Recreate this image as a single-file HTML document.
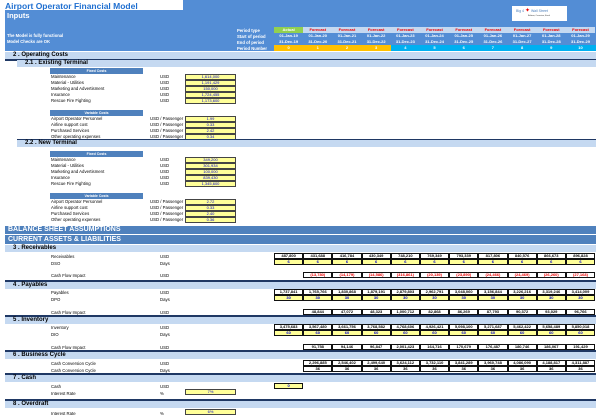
<!DOCTYPE html>
<html><head><meta charset="utf-8"><style>
*{margin:0;padding:0;box-sizing:border-box}
body{width:600px;height:420px;background:#fff;position:relative;overflow:hidden;font-family:"Liberation Sans",sans-serif;font-size:4.3px;color:#000}
.a{position:absolute;white-space:nowrap}
.bar{position:absolute;left:5px;width:591px;background:#c5d9f1;font-weight:bold;font-size:6px;line-height:7px;padding-left:8px}
.dk{position:absolute;left:5px;width:591px;height:1.5px;background:#1f3864}
.big{position:absolute;left:5px;width:591px;background:#4f81bd;color:#fff;font-weight:bold;font-size:7px;line-height:8px;padding-left:3px}
.hd{position:absolute;left:50px;width:93px;height:6px;background:#4f81bd;color:#fff;font-weight:bold;font-size:3.5px;line-height:6px;text-align:center}
.yb{position:absolute;left:185px;width:51px;height:6px;background:#ffff99;border:1px solid #444;font-size:4px;line-height:4px;text-align:center;color:#0000cc}
.row{position:absolute;left:274px;display:flex;height:6px}
.row div{width:29.2px;height:6px;border:1px solid #111;font-size:4px;line-height:4px;text-align:center;font-weight:bold}
.row div.e{border:none;background:none}
.y div{background:#ffff99;color:#0000cc}
.r div{color:#e00}
.hr{position:absolute;left:274px;display:flex;height:6px}
.hr div{width:29.2px;text-align:center;font-size:4px;line-height:6px;font-weight:bold}
</style></head><body>
<div class="a" style="left:183px;top:0;width:413px;height:11px;background:#538dd5"></div>
<div class="a" style="left:5px;top:1px;color:#1f6fd0;font-weight:bold;font-size:8.5px">Airport Operator Financial Model</div>
<div class="a" style="left:5px;top:10px;width:591px;height:41px;background:#538dd5"></div>
<div class="a" style="left:7px;top:11px;color:#fff;font-weight:bold;font-size:7.5px">Inputs</div>
<div class="a" style="left:7px;top:33px;color:#fff;font-weight:bold;font-size:4.2px">The Model is fully functional</div>
<div class="a" style="left:7px;top:39px;color:#fff;font-weight:bold;font-size:4.2px">Model Checks are OK</div>
<div class="a" style="left:237px;top:28px;color:#fff;font-weight:bold;font-size:4.2px;line-height:6px">Period type<br>Start of period<br>End of period<br>Period Number</div>
<div class="a" style="left:512px;top:6px;width:55px;height:15px;background:#fff;font-size:3.5px;color:#4f81bd;padding:3px 0 0 4px;line-height:4px">Big 4 <span style="color:#e00;font-size:6px">&#10022;</span> Wall Street<br><span style="color:#333;font-size:2px;padding-left:12px">Believe, Conceive, Excel</span></div>
<div class="hr" style="top:27px;background:#c5d9f1;color:#e00;width:321px"><div style="background:#92d050;color:#fff">Actual</div><div>Forecast</div><div>Forecast</div><div>Forecast</div><div>Forecast</div><div>Forecast</div><div>Forecast</div><div>Forecast</div><div>Forecast</div><div>Forecast</div><div>Forecast</div></div>
<div class="hr" style="top:33px;color:#fff"><div>01-Jan-19</div><div>01-Jan-20</div><div>01-Jan-21</div><div>01-Jan-22</div><div>01-Jan-23</div><div>01-Jan-24</div><div>01-Jan-25</div><div>01-Jan-26</div><div>01-Jan-27</div><div>01-Jan-28</div><div>01-Jan-29</div></div>
<div class="hr" style="top:39px;color:#fff"><div>31-Dec-19</div><div>31-Dec-20</div><div>31-Dec-21</div><div>31-Dec-22</div><div>31-Dec-23</div><div>31-Dec-24</div><div>31-Dec-25</div><div>31-Dec-26</div><div>31-Dec-27</div><div>31-Dec-28</div><div>31-Dec-29</div></div>
<div class="hr" style="top:45px;color:#fff;background:#00b0f0;width:322px"><div style="background:#ffc000">0</div><div style="background:#ffc000">1</div><div style="background:#ffc000">2</div><div style="background:#ffc000">3</div><div>4</div><div>5</div><div>6</div><div>7</div><div>8</div><div>9</div><div>10</div></div>

<div class="bar" style="top:52px;height:7px">2 . Operating Costs</div>
<div class="dk" style="top:59px"></div>
<div class="bar" style="top:60px;left:17px;width:579px;height:7px">2.1 . Existing Terminal</div>
<div class="hd" style="top:68px">Fixed Costs</div>
<div class="a" style="left:51px;top:74px;line-height:6px">Maintenance<br>Material - Utilities<br>Marketing and Advertisment<br>Insurance<br>Rescue Fire Fighting</div>
<div class="a" style="left:160px;top:74px;line-height:6px">USD<br>USD<br>USD<br>USD<br>USD</div>
<div class="yb" style="top:74px">1,614,000</div><div class="yb" style="top:80px">1,191,429</div><div class="yb" style="top:86px">150,000</div><div class="yb" style="top:92px">1,724,455</div><div class="yb" style="top:98px">1,173,600</div>
<div class="hd" style="top:110px">Variable Costs</div>
<div class="a" style="left:51px;top:116px;line-height:6px">Airport Operator Personnel<br>Airline support cost<br>Purchased Services<br>Other operating expenses</div>
<div class="a" style="left:150px;top:116px;line-height:6px">USD / Passenger<br>USD / Passenger<br>USD / Passenger<br>USD / Passenger</div>
<div class="yb" style="top:116px">1.99</div><div class="yb" style="top:122px">0.33</div><div class="yb" style="top:128px">2.42</div><div class="yb" style="top:134px">0.34</div>

<div class="dk" style="top:139px;left:17px;width:579px"></div>
<div class="bar" style="top:140px;left:17px;width:579px;height:7px">2.2 . New Terminal</div>
<div class="hd" style="top:151px">Fixed Costs</div>
<div class="a" style="left:51px;top:157px;line-height:6px">Maintenance<br>Material - Utilities<br>Marketing and Advertisment<br>Insurance<br>Rescue Fire Fighting</div>
<div class="a" style="left:160px;top:157px;line-height:6px">USD<br>USD<br>USD<br>USD<br>USD</div>
<div class="yb" style="top:157px">349,200</div><div class="yb" style="top:163px">301,934</div><div class="yb" style="top:169px">100,000</div><div class="yb" style="top:175px">839,430</div><div class="yb" style="top:181px">1,345,600</div>
<div class="hd" style="top:193px">Variable Costs</div>
<div class="a" style="left:51px;top:199px;line-height:6px">Airport Operator Personnel<br>Airline support cost<br>Purchased Services<br>Other operating expenses</div>
<div class="a" style="left:150px;top:199px;line-height:6px">USD / Passenger<br>USD / Passenger<br>USD / Passenger<br>USD / Passenger</div>
<div class="yb" style="top:199px">2.72</div><div class="yb" style="top:205px">0.33</div><div class="yb" style="top:211px">2.40</div><div class="yb" style="top:217px">0.36</div>

<div class="big" style="top:226px;height:8px">BALANCE SHEET ASSUMPTIONS</div>
<div class="big" style="top:235px;height:9px;line-height:9px">CURRENT ASSETS &amp; LIABILITIES</div>
<div class="bar" style="top:245px;height:7px">3 . Receivables</div>
<div class="a" style="left:51px;top:254px;line-height:6.5px">Receivables<br>DSO</div>
<div class="a" style="left:160px;top:254px;line-height:6.5px">USD<br>Days</div>
<div class="row" style="top:253px"><div>487,800</div><div>431,688</div><div>416,784</div><div>430,349</div><div>748,210</div><div>769,349</div><div>793,339</div><div>817,806</div><div>840,576</div><div>866,673</div><div>896,828</div></div>
<div class="row y" style="top:259px"><div>6</div><div>6</div><div>6</div><div>6</div><div>6</div><div>6</div><div>6</div><div>6</div><div>6</div><div>6</div><div>6</div></div>
<div class="a" style="left:51px;top:273px">Cash Flow Impact</div><div class="a" style="left:160px;top:273px">USD</div>
<div class="row r" style="top:272px"><div class="e"></div><div>(13,780)</div><div>(14,179)</div><div>(14,586)</div><div>(316,861)</div><div>(20,139)</div><div>(23,890)</div><div>(24,466)</div><div>(24,469)</div><div>(26,260)</div><div>(27,168)</div></div>

<div class="dk" style="top:280px"></div>
<div class="bar" style="top:281.5px;height:7px">4 . Payables</div>
<div class="a" style="left:51px;top:290px;line-height:6.5px">Payables<br>DPO</div>
<div class="a" style="left:160px;top:290px;line-height:6.5px">USD<br>Days</div>
<div class="row" style="top:289px"><div>1,737,841</div><div>1,765,766</div><div>1,830,868</div><div>1,879,191</div><div>2,879,803</div><div>2,962,791</div><div>3,048,060</div><div>3,156,844</div><div>3,226,216</div><div>3,319,246</div><div>3,414,009</div></div>
<div class="row y" style="top:295px"><div>30</div><div>30</div><div>30</div><div>30</div><div>30</div><div>30</div><div>30</div><div>30</div><div>30</div><div>30</div><div>30</div></div>
<div class="a" style="left:51px;top:310px">Cash Flow Impact</div><div class="a" style="left:160px;top:310px">USD</div>
<div class="row" style="top:309px"><div class="e"></div><div>48,844</div><div>47,072</div><div>48,323</div><div>1,000,712</div><div>82,868</div><div>86,269</div><div>87,793</div><div>90,372</div><div>93,029</div><div>96,766</div></div>

<div class="dk" style="top:315px"></div>
<div class="bar" style="top:316.5px;height:7px">5 . Inventory</div>
<div class="a" style="left:51px;top:325px;line-height:6.5px">Inventory<br>DIO</div>
<div class="a" style="left:160px;top:325px;line-height:6.5px">USD<br>Days</div>
<div class="row" style="top:324px"><div>3,475,683</div><div>3,567,480</div><div>3,661,756</div><div>3,768,582</div><div>4,768,606</div><div>4,926,421</div><div>5,098,100</div><div>5,271,687</div><div>5,462,422</div><div>5,658,489</div><div>5,850,018</div></div>
<div class="row y" style="top:330px"><div>60</div><div>60</div><div>60</div><div>60</div><div>60</div><div>60</div><div>60</div><div>60</div><div>60</div><div>60</div><div>60</div></div>
<div class="a" style="left:51px;top:345px">Cash Flow Impact</div><div class="a" style="left:160px;top:345px">USD</div>
<div class="row" style="top:344px"><div class="e"></div><div>91,758</div><div>94,146</div><div>96,847</div><div>2,001,423</div><div>164,716</div><div>170,679</div><div>176,487</div><div>180,746</div><div>186,067</div><div>191,429</div></div>

<div class="dk" style="top:350px"></div>
<div class="bar" style="top:351.5px;height:7px">6 . Business Cycle</div>
<div class="a" style="left:51px;top:361px;line-height:6.5px">Cash Conversion Cycle<br>Cash Conversion Cycle</div>
<div class="a" style="left:160px;top:361px;line-height:6.5px">USD<br>Days</div>
<div class="row" style="top:360px"><div class="e"></div><div>2,296,885</div><div>2,546,402</div><div>2,499,640</div><div>3,624,112</div><div>3,732,110</div><div>3,841,289</div><div>3,960,748</div><div>4,086,090</div><div>4,188,817</div><div>4,311,887</div></div>
<div class="row" style="top:366px"><div class="e"></div><div>36</div><div>36</div><div>36</div><div>36</div><div>36</div><div>36</div><div>36</div><div>36</div><div>36</div><div>36</div></div>

<div class="dk" style="top:373px"></div>
<div class="bar" style="top:374.5px;height:7px">7 . Cash</div>
<div class="a" style="left:51px;top:384px;line-height:6.5px">Cash<br>Interest Rate</div>
<div class="a" style="left:160px;top:384px;line-height:6.5px">USD<br>%</div>
<div class="row y" style="top:383px"><div>0</div></div>
<div class="yb" style="top:389px">7%</div>

<div class="dk" style="top:399px"></div>
<div class="bar" style="top:400.5px;height:7px">8 . Overdraft</div>
<div class="a" style="left:51px;top:411px">Interest Rate</div><div class="a" style="left:160px;top:411px">%</div>
<div class="yb" style="top:409px">6%</div>
</body></html>
